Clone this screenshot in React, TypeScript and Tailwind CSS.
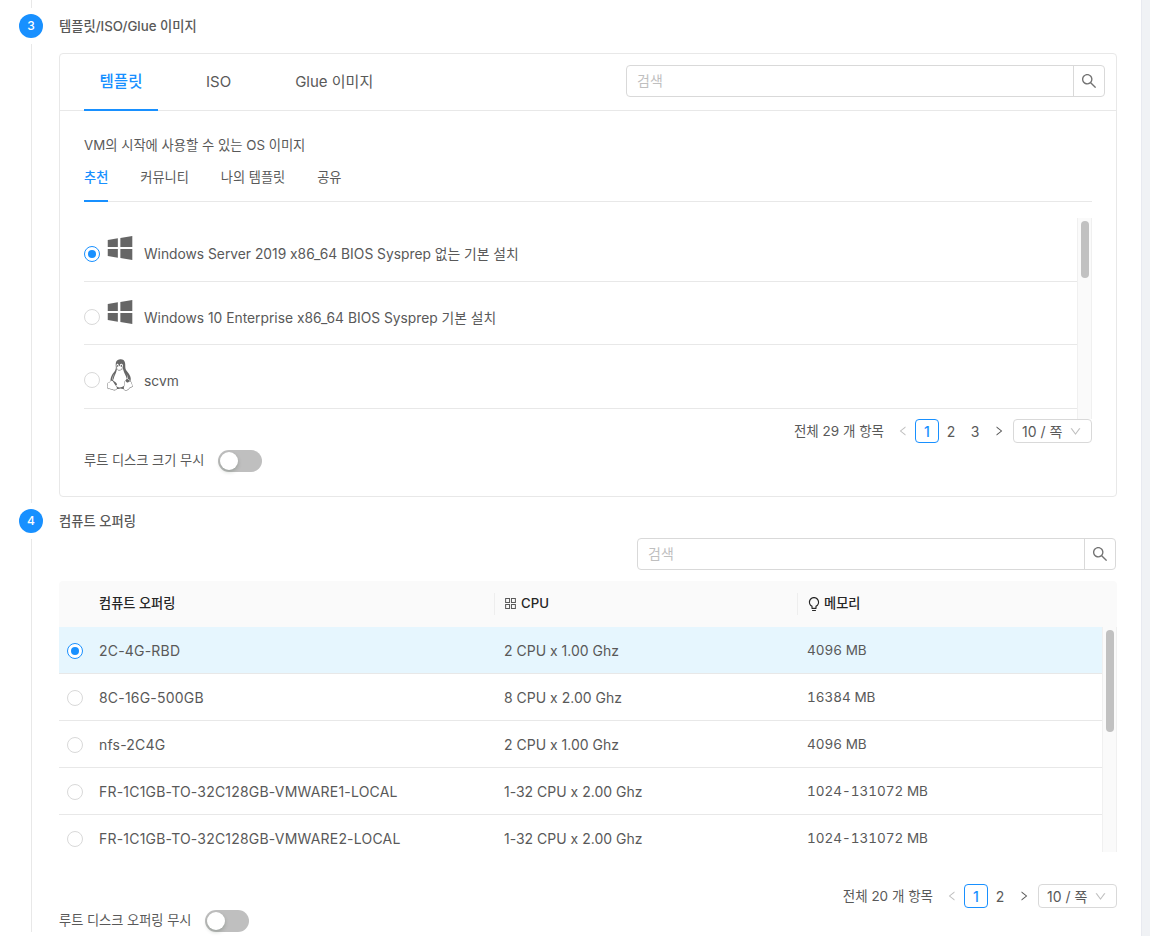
import type { ReactNode } from 'react';
import { AiFillWindows, AiOutlineAppstore, AiOutlineBulb, AiOutlineDown, AiOutlineLeft, AiOutlineLinux, AiOutlineRight, AiOutlineSearch } from 'react-icons/ai';

const templates = [
  { name: 'Windows Server 2019 x86_64 BIOS Sysprep 없는 기본 설치', os: 'windows', selected: true, row: 'h-[64px]', radio: 'mt-[28px]' },
  { name: 'Windows 10 Enterprise x86_64 BIOS Sysprep 기본 설치', os: 'windows', selected: false, row: 'h-[63px]', radio: 'mt-[27px]' },
  { name: 'scvm', os: 'linux', selected: false, row: 'h-[64px]', radio: 'mt-[27px]' },
];

const offerings = [
  { name: '2C-4G-RBD', cpu: '2 CPU x 1.00 Ghz', mem: '4096 MB', selected: true },
  { name: '8C-16G-500GB', cpu: '8 CPU x 2.00 Ghz', mem: '16384 MB', selected: false },
  { name: 'nfs-2C4G', cpu: '2 CPU x 1.00 Ghz', mem: '4096 MB', selected: false },
  { name: 'FR-1C1GB-TO-32C128GB-VMWARE1-LOCAL', cpu: '1-32 CPU x 2.00 Ghz', mem: '1024-131072 MB', selected: false },
  { name: 'FR-1C1GB-TO-32C128GB-VMWARE2-LOCAL', cpu: '1-32 CPU x 2.00 Ghz', mem: '1024-131072 MB', selected: false },
];

function Radio({ checked }: { checked: boolean }) {
  return (
    <span className={`flex h-4 w-4 shrink-0 items-center justify-center rounded-full border bg-white ${checked ? 'border-[#1890ff]' : 'border-[#d9d9d9]'}`}>
      {checked && <span className="h-2 w-2 rounded-full bg-[#1890ff]" />}
    </span>
  );
}

function Toggle() {
  return (
    <span className="flex h-[22px] w-11 shrink-0 items-center rounded-full bg-[#bfbfbf] pl-0.5">
      <span className="h-[18px] w-[18px] rounded-full bg-white shadow-[0_2px_4px_rgba(0,35,11,0.2)]" />
    </span>
  );
}

function SearchBox({ className }: { className: string }) {
  return (
    <div className={`flex h-8 w-[479px] rounded border border-[#d9d9d9] bg-white ${className}`}>
      <span className="flex-1 pl-[10px] text-[14px] leading-[30px] text-[#bfbfbf]">검색</span>
      <span className="flex w-[31px] items-center justify-center border-l border-[#d9d9d9] text-[#737373]">
        <AiOutlineSearch size={18} />
      </span>
    </div>
  );
}

function Pagination({ total, pages }: { total: number; pages: number[] }) {
  return (
    <div className="flex h-6 items-center justify-end text-[13.5px] text-[#595959]">
      <span className="mr-[7px]">전체 {total} 개 항목</span>
      <span className="flex w-6 items-center justify-center text-[#bfbfbf]"><AiOutlineLeft size={12} /></span>
      {pages.map(p => (
        <span
          key={p}
          className={`flex h-6 w-6 items-center justify-center rounded text-[14px] ${p === 1 ? 'border border-[#1890ff] font-medium text-[#1890ff]' : ''}`}
        >
          {p}
        </span>
      ))}
      <span className="flex w-6 items-center justify-center"><AiOutlineRight size={12} /></span>
      <span className="ml-0.5 flex h-6 w-[79px] items-center justify-between rounded border border-[#d9d9d9] pl-2 pr-[9px] text-[14px]">
        10 / 쪽
        <AiOutlineDown size={13} className="text-[#bfbfbf]" />
      </span>
    </div>
  );
}

function Scrollbar({ thumb }: { thumb: string }) {
  return (
    <div className="w-[15px] shrink-0 border-x border-[#f0f0f0] bg-[#fafafa] px-[3px] pt-[3px]">
      <div className={`w-2 rounded-full bg-[#c1c1c1] ${thumb}`} />
    </div>
  );
}

function Step({ num, title, first, children }: { num: number; title: string; first?: boolean; children: ReactNode }) {
  return (
    <div className="flex">
      <div className="flex w-[59px] shrink-0 flex-col pl-[19px]">
        <div className="flex w-6 flex-1 flex-col items-center">
          {first && <div className="mb-[6px] h-2 w-px bg-[#e8e8e8]" />}
          <div className="flex h-6 w-6 shrink-0 items-center justify-center rounded-full bg-[#1890ff] text-[12px] font-medium text-white">
            {num}
          </div>
          <div className={`mt-[6px] w-px flex-1 bg-[#e8e8e8] ${first ? 'mb-[6px]' : ''}`} />
        </div>
      </div>
      <div className={`min-w-0 flex-1 ${first ? 'pb-3 pt-[14px]' : ''}`}>
        <div className="h-6 text-[13.3px] font-medium leading-6 text-[#595959]">{title}</div>
        {children}
      </div>
    </div>
  );
}

export default function App() {
  return (
    <div className="flex h-[936px] overflow-hidden bg-white font-[Inter,'Noto_Sans_CJK_KR',sans-serif] text-[#595959] [font-feature-settings:'calt'_0]">
      <div className="w-[1141px] shrink-0 pr-6">
        <Step num={3} title="템플릿/ISO/Glue 이미지" first>
          <div className="mt-[15px] h-[444px] rounded border border-[#e8e8e8]">
            {/* Top tabs */}
            <div className="flex h-[57px] items-start border-b border-[#e8e8e8] pl-6 pr-[11px]">
              <div className="flex h-[57px] w-[74px] items-center justify-center border-b-2 border-[#1890ff] text-[15.5px] font-medium text-[#1890ff]">템플릿</div>
              <div className="ml-12 flex h-14 items-center text-[15px]">ISO</div>
              <div className="ml-16 flex h-14 items-center text-[15px]">Glue 이미지</div>
              <SearchBox className="ml-auto mt-[11px]" />
            </div>
            <div className="px-6 pt-[24px]">
              <div className="h-5 text-[13.3px] leading-5">VM의 시작에 사용할 수 있는 OS 이미지</div>
              {/* Inner tabs */}
              <div className="mt-[3px] flex h-[44px] gap-8 border-b border-[#e8e8e8] text-[13.2px]">
                <div className="flex h-[44px] items-center border-b-2 border-[#1890ff] pb-[3px] font-medium text-[#1890ff]">추천</div>
                <div className="flex items-center pb-[3px]">커뮤니티</div>
                <div className="flex items-center pb-[3px]">나의 템플릿</div>
                <div className="flex items-center pb-[3px]">공유</div>
              </div>
              {/* Template list */}
              <div className="mt-4 flex h-[201px]">
                <div className="flex-1">
                  {templates.map(t => (
                    <div key={t.name} className={`flex items-start border-b border-[#e8e8e8] ${t.row}`}>
                      <span className={`flex items-center ${t.radio}`}><Radio checked={t.selected} /></span>
                      <span className="ml-2 mt-[18px] flex h-6 w-6 items-center justify-center text-[#666666]">
                        {t.os === 'windows' ? <AiFillWindows size={32} className="shrink-0" /> : <AiOutlineLinux size={36} className="shrink-0" />}
                      </span>
                      <span className="ml-3 mt-[26px] text-[13.8px] leading-5">{t.name}</span>
                    </div>
                  ))}
                </div>
                <Scrollbar thumb="h-[57px]" />
              </div>
              <Pagination total={29} pages={[1, 2, 3]} />
              <div className="mt-[7px] flex h-[22px] items-center gap-[14px] text-[13.2px]">
                <span>루트 디스크 크기 무시</span>
                <Toggle />
              </div>
            </div>
          </div>
        </Step>
        <Step num={4} title="컴퓨트 오퍼링">
          <SearchBox className="ml-auto mr-px mt-[5px]" />
          {/* Offering table */}
          <div className="mt-[11px] flex h-[46px] items-center rounded-t bg-[#fafafa] pb-px text-[13.2px] font-medium text-[#262626]">
            <div className="w-[435px] shrink-0 pl-10">컴퓨트 오퍼링</div>
            <div className="flex h-[22px] w-[303px] shrink-0 items-center gap-[3px] border-l border-[#eeeeee] pl-2">
              <AiOutlineAppstore size={15} className="text-[#595959]" />
              CPU
            </div>
            <div className="flex h-[22px] items-center gap-0.5 border-l border-[#eeeeee] pl-2">
              <AiOutlineBulb size={16} />
              메모리
            </div>
          </div>
          <div className="flex h-[225px] overflow-hidden">
            <div className="min-w-0 flex-1">
              {offerings.map(o => (
                <div key={o.name} className={`flex h-[47px] items-center border-b border-[#e8e8e8] pt-px text-[14px] ${o.selected ? 'bg-[#e6f6fe]' : ''}`}>
                  <span className="flex w-8 shrink-0 justify-center"><Radio checked={o.selected} /></span>
                  <span className="ml-2 w-[405px] shrink-0 tracking-[0.2px]">{o.name}</span>
                  <span className="w-[303px] shrink-0">{o.cpu}</span>
                  <span className="text-[13.5px] tabular-nums">{o.mem}</span>
                </div>
              ))}
            </div>
            <Scrollbar thumb="h-[102px]" />
          </div>
          <div className="mt-8">
            <Pagination total={20} pages={[1, 2]} />
          </div>
          <div className="mt-[2px] flex h-[22px] items-center gap-[14px] text-[13.2px]">
            <span>루트 디스크 오퍼링 무시</span>
            <Toggle />
          </div>
        </Step>
      </div>
      <div className="flex-1 border-l border-[#e8eaf0] bg-[#f0f2f5]" />
    </div>
  );
}
